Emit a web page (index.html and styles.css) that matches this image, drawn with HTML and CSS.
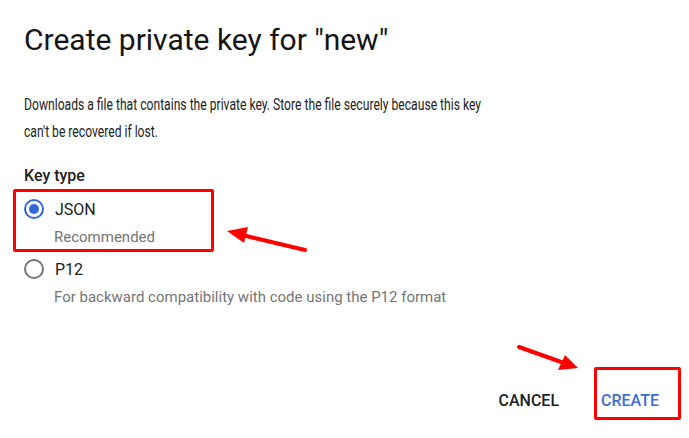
FILE: index.html
```html
<!DOCTYPE html>
<html>
<head>
<meta charset="utf-8">
<link rel="stylesheet" href="styles.css">
</head>
<body>
<div class="dialog">
  <h1 class="title">Create private key for "new"</h1>
  <p class="desc"><span class="desc-inner">Downloads a file that contains the private key. Store the file securely because this key<br>can't be recovered if lost.</span></p>
  <div class="label">Key type</div>
  <div class="options">
    <div class="option highlighted">
      <div class="opt-row">
        <span class="radio checked"></span>
        <span class="opt-name">JSON</span>
      </div>
      <div class="opt-hint">Recommended</div>
    </div>
    <div class="option">
      <div class="opt-row">
        <span class="radio"></span>
        <span class="opt-name">P12</span>
      </div>
      <div class="opt-hint">For backward compatibility with code using the P12 format</div>
    </div>
  </div>
  <div class="actions">
    <button class="btn cancel">CANCEL</button>
    <button class="btn create">CREATE</button>
  </div>
</div>
<svg class="arrows" width="689" height="438" viewBox="0 0 689 438">
  <g stroke="#f00" stroke-width="4" stroke-linecap="round" fill="#f00">
    <line x1="305" y1="250" x2="242" y2="235"/>
    <polygon points="227,231 248,227 244,243" stroke="none"/>
    <line x1="519" y1="347" x2="564" y2="363"/>
    <polygon points="578,368 558,370 565,355" stroke="none"/>
  </g>
</svg>
</body>
</html>
```
FILE: styles.css
```css
html, body {
  margin: 0;
  padding: 0;
  background: #fff;
}
body {
  width: 689px;
  height: 438px;
  position: relative;
  overflow: hidden;
  font-family: Roboto, "Noto Sans", sans-serif;
  color: #202124;
}
.dialog {
  padding: 20px 24px 0 24px;
}
.title {
  margin: 0;
  font-size: 30px;
  font-weight: 400;
  line-height: 40px;
  color: #151515;
}
.desc {
  margin: 31px 0 0 0;
  font-size: 16px;
  line-height: 27px;
  color: #222;
  white-space: nowrap;
}
.desc-inner {
  display: inline-block;
  transform: scaleX(0.758);
  transform-origin: left center;
}
.label {
  margin-top: 19px;
  font-size: 16px;
  font-weight: 500;
  line-height: 24px;
  color: #212121;
}
.options {
  display: flex;
  flex-direction: column;
  margin-top: 4px;
}
.option {
  position: relative;
  padding-bottom: 4px;
}
.option.highlighted::after {
  content: "";
  position: absolute;
  left: -11px;
  top: -3px;
  width: 195px;
  height: 57px;
  border: 3px solid #f00;
  border-radius: 2px;
}
.opt-row {
  display: flex;
  align-items: center;
  gap: 11px;
  height: 34px;
}
.radio {
  width: 16px;
  height: 16px;
  border: 2px solid #757575;
  border-radius: 50%;
  position: relative;
  flex: none;
}
.radio.checked {
  border-color: #3367d6;
}
.radio.checked::after {
  content: "";
  position: absolute;
  left: 3px;
  top: 3px;
  width: 10px;
  height: 10px;
  border-radius: 50%;
  background: #3367d6;
}
.opt-name {
  font-size: 16px;
  color: #212121;
}
.opt-hint {
  margin-left: 30px;
  font-size: 15px;
  line-height: 22px;
  color: #757575;
}
.actions {
  display: flex;
  justify-content: flex-end;
  gap: 42px;
  margin-top: 74px;
  padding-right: 6px;
}
.btn {
  background: none;
  border: none;
  padding: 0;
  font-family: Roboto, sans-serif;
  font-size: 16px;
  font-weight: 500;
  line-height: 30px;
  cursor: pointer;
}
.cancel {
  color: #212121;
}
.create {
  color: #3b6fd6;
  position: relative;
}
.create::after {
  content: "";
  position: absolute;
  left: -7px;
  top: -19px;
  width: 81px;
  height: 47px;
  border: 3px solid #f00;
  border-radius: 2px;
}
.arrows {
  position: absolute;
  left: 0;
  top: 0;
  pointer-events: none;
}
```
